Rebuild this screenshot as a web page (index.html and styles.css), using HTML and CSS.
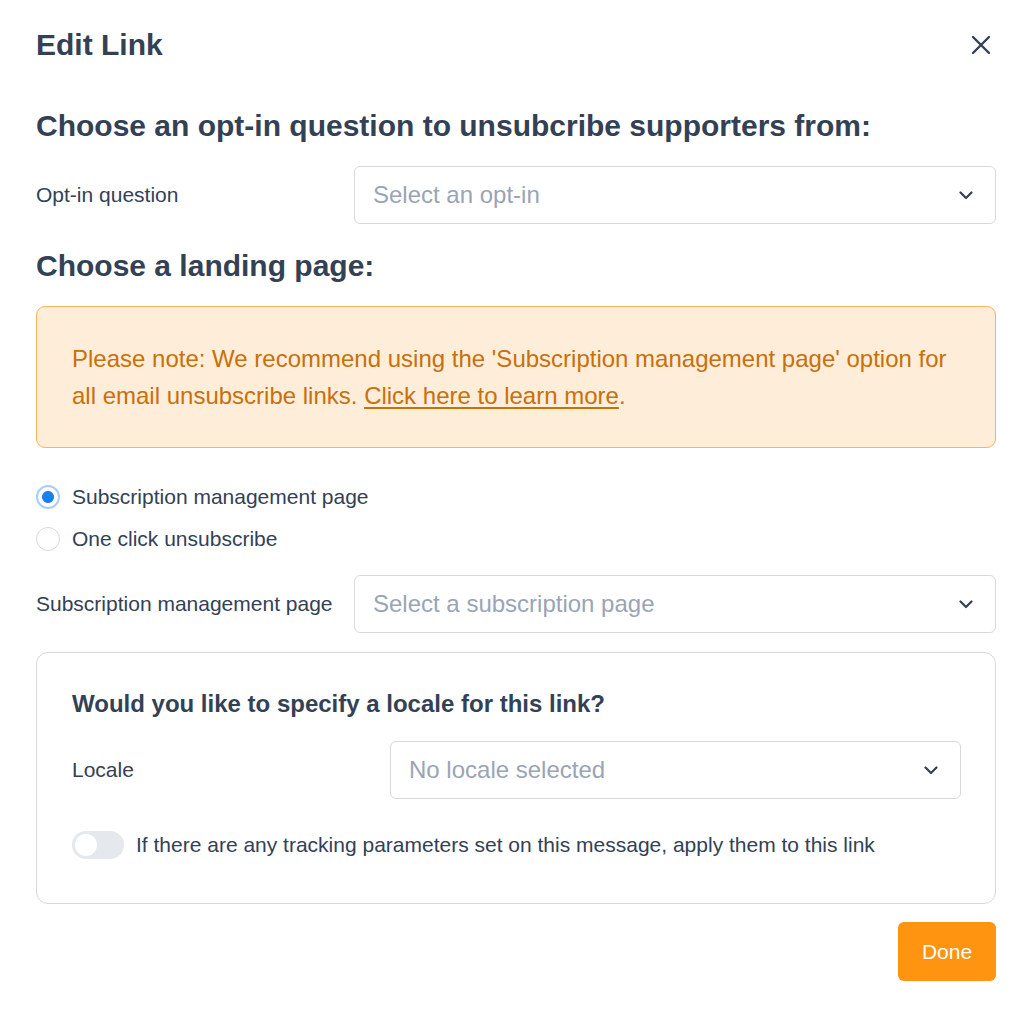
FILE: index.html
```html
<!DOCTYPE html>
<html lang="en">

<head>
    <meta charset="UTF-8">
    <meta name="viewport" content="width=device-width, initial-scale=1.0">
    <title>Edit Link</title>
    <link rel="stylesheet" href="styles.css">
</head>

<body>
    <div class="modal">
        <div class="modal-header">
            <h1>Edit Link</h1>
            <button class="close" aria-label="Close">
                <svg width="20" height="20" viewBox="0 0 20 20">
                    <path d="M2 2L18 18M18 2L2 18" stroke="#334155" stroke-width="2.4" stroke-linecap="round" />
                </svg>
            </button>
        </div>

        <h2 class="section-title">Choose an opt-in question to unsubcribe supporters from:</h2>
        <div class="field">
            <label>Opt-in question</label>
            <div class="select">
                <span>Select an opt-in</span>
                <svg class="chevron" width="14" height="9" viewBox="0 0 14 9">
                    <path d="M1.5 1.5L7 7L12.5 1.5" fill="none" stroke="#334155" stroke-width="2.2" stroke-linecap="round" stroke-linejoin="round" />
                </svg>
            </div>
        </div>

        <h2 class="section-title landing">Choose a landing page:</h2>
        <div class="alert">
            Please note: We recommend using the 'Subscription management page' option for all email unsubscribe links. <a href="#">Click here to learn more</a>.
        </div>

        <div class="radios">
            <label class="radio checked"><span class="dot"></span>Subscription management page</label>
            <label class="radio"><span class="dot"></span>One click unsubscribe</label>
        </div>

        <div class="field">
            <label>Subscription management page</label>
            <div class="select">
                <span>Select a subscription page</span>
                <svg class="chevron" width="14" height="9" viewBox="0 0 14 9">
                    <path d="M1.5 1.5L7 7L12.5 1.5" fill="none" stroke="#334155" stroke-width="2.2" stroke-linecap="round" stroke-linejoin="round" />
                </svg>
            </div>
        </div>

        <div class="card">
            <h3>Would you like to specify a locale for this link?</h3>
            <div class="field">
                <label>Locale</label>
                <div class="select">
                    <span>No locale selected</span>
                    <svg class="chevron" width="14" height="9" viewBox="0 0 14 9">
                        <path d="M1.5 1.5L7 7L12.5 1.5" fill="none" stroke="#334155" stroke-width="2.2" stroke-linecap="round" stroke-linejoin="round" />
                    </svg>
                </div>
            </div>
            <div class="toggle-row">
                <span class="toggle"><span class="knob"></span></span>
                If there are any tracking parameters set on this message, apply them to this link
            </div>
        </div>

        <div class="actions">
            <button class="primary">Done</button>
        </div>
    </div>
</body>

</html>
```

FILE: styles.css
```css
* {
    padding: 0;
    margin: 0;
    box-sizing: border-box;
}

html,
body {
    width: 100%;
    height: 100%;
    background: #fff;
}

body {
    font-family: "Liberation Sans", Arial, sans-serif;
    color: #334155;
    font-size: 21px;
}

.modal {
    width: 1032px;
    padding: 27px 36px 0 36px;
}

.modal .modal-header {
    display: flex;
    align-items: center;
    justify-content: space-between;
    height: 36px;
}

.modal-header h1 {
    font-size: 30px;
    line-height: 36px;
    font-weight: bold;
}

.modal-header .close {
    border: none;
    background: none;
    width: 20px;
    height: 20px;
    margin-right: 5px;
    display: flex;
}

.section-title {
    font-size: 30px;
    line-height: 36px;
    font-weight: bold;
    margin-top: 45px;
}

.section-title.landing {
    margin-top: 24px;
}

.field {
    display: grid;
    grid-template-columns: 318px 1fr;
    align-items: center;
    margin-top: 22px;
}

.field>label {
    font-size: 21px;
}

.select {
    height: 58px;
    border: 1px solid #d5d9e0;
    border-radius: 6px;
    display: flex;
    align-items: center;
    justify-content: space-between;
    padding: 0 22px 0 18px;
    font-size: 24px;
    color: #9aa4b5;
}

.alert {
    margin-top: 22px;
    background-color: #feedd8;
    border: 1px solid #f9b35a;
    border-radius: 9px;
    padding: 33px 35px;
    font-size: 24px;
    line-height: 37px;
    color: #c8700b;
}

.alert a {
    color: #c8700b;
    text-decoration: underline;
    text-underline-offset: 3px;
}

.radios {
    margin-top: 34px;
    display: flex;
    flex-direction: column;
    gap: 12px;
}

.radio {
    display: flex;
    align-items: center;
    height: 30px;
    font-size: 21px;
}

.radio .dot {
    width: 24px;
    height: 24px;
    border-radius: 50%;
    border: 1px solid #d5d9e0;
    margin-right: 12px;
    background: #fff;
}

.radio.checked .dot {
    border: 2px solid #a8cdf6;
    background: radial-gradient(circle, #1a7fe8 0 5.5px, #fff 6.5px);
}

.radios+.field {
    margin-top: 21px;
}

.card {
    margin-top: 19px;
    border: 1px solid #d5d9e0;
    border-radius: 12px;
    padding: 36px 34px 43px 35px;
}

.card h3 {
    font-size: 24px;
    line-height: 30px;
    font-weight: bold;
}

.card .field {
    margin-top: 22px;
}

.toggle-row {
    margin-top: 31px;
    display: flex;
    align-items: center;
    height: 30px;
    font-size: 21px;
}

.toggle {
    width: 52px;
    height: 28px;
    border-radius: 14px;
    background-color: #e5e8ed;
    padding: 3px;
    margin-right: 12px;
    display: flex;
}

.toggle .knob {
    width: 22px;
    height: 22px;
    border-radius: 50%;
    background: #fff;
}

.actions {
    display: flex;
    justify-content: flex-end;
    margin-top: 18px;
}

.actions button.primary {
    width: 98px;
    height: 59px;
    border: none;
    border-radius: 6px;
    background-color: #ff9411;
    color: #fff;
    font-family: "Liberation Sans", Arial, sans-serif;
    font-size: 21px;
}

button:focus,
button:active {
    outline: none;
}
```
